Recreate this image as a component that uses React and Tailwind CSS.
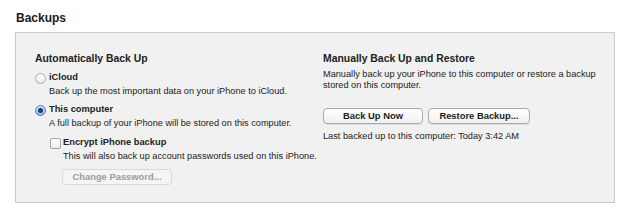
const font = { fontFamily: '"Liberation Sans", Arial, sans-serif' };

const Radio = ({ checked }) => (
  <span
    className={`flex items-center justify-center w-[11px] h-[11px] rounded-full border shrink-0 ${
      checked
        ? "border-[#4f7fc4] bg-gradient-to-b from-[#cfe0f7] to-[#8fb6ea]"
        : "border-[#a9a9a9] bg-gradient-to-b from-[#ffffff] to-[#e9e9e9]"
    }`}
  >
    {checked && <span className="w-[5px] h-[5px] rounded-full bg-[#1d3f73]" />}
  </span>
);

const Checkbox = () => (
  <span className="w-[11px] h-[11px] rounded-[2px] border border-[#a5a5a5] bg-gradient-to-b from-white to-[#ededed] shrink-0" />
);

const Button = ({ children, disabled, className = "" }) => (
  <button
    className={`h-[16px] rounded-[4px] border text-[9.4px] font-bold leading-none flex items-center justify-center ${
      disabled
        ? "border-[#d8d8d8] bg-[#f5f5f5] text-[#9c9c9c]"
        : "border-[#ababab] bg-gradient-to-b from-white to-[#f0f0f0] text-[#1e1e1e] shadow-[0_1px_0_rgba(0,0,0,0.08)]"
    } ${className}`}
  >
    {children}
  </button>
);

export default function App() {
  return (
    <div className="w-[628px] h-[216px] bg-white text-[#222] pt-[11px]" style={font}>
      <h1 className="ml-[16px] text-[12px] font-bold leading-[14px] text-[#1a1a1a]">Backups</h1>
      <div className="ml-[15px] mt-[7px] w-[600px] h-[171px] border border-[#cbcbcb] bg-[#f1f1f1] flex pt-[19px]">
        <div className="w-[307px] shrink-0 pl-[19px]">
          <h2 className="text-[10.4px] font-bold leading-[13px]">Automatically Back Up</h2>
          <div className="mt-[6px] flex items-center gap-[3px] h-[14px]">
            <Radio />
            <span className="text-[9.3px] font-bold">iCloud</span>
          </div>
          <p className="pl-[14px] text-[9.2px] leading-[12px]">
            Back up the most important data on your iPhone to iCloud.
          </p>
          <div className="mt-[6px] flex items-center gap-[3px] h-[14px]">
            <Radio checked />
            <span className="text-[9.3px] font-bold">This computer</span>
          </div>
          <p className="pl-[14px] text-[9.2px] leading-[12px]">
            A full backup of your iPhone will be stored on this computer.
          </p>
          <div className="pl-[15px] mt-[7px] flex items-center gap-[2px] h-[14px]">
            <Checkbox />
            <span className="text-[9.3px] font-bold">Encrypt iPhone backup</span>
          </div>
          <p className="pl-[28px] text-[9.2px] leading-[12px] whitespace-nowrap">
            This will also back up account passwords used on this iPhone.
          </p>
          <div className="pl-[27px] mt-[7px]">
            <Button disabled className="w-[110px]">
              Change Password...
            </Button>
          </div>
        </div>
        <div className="flex-1">
          <h2 className="text-[10.4px] font-bold leading-[13px]">Manually Back Up and Restore</h2>
          <p className="mt-[4px] text-[9.2px] leading-[10.5px] w-[275px]">
            Manually back up your iPhone to this computer or restore a backup stored on this computer.
          </p>
          <div className="mt-[18px] flex gap-[5px]">
            <Button className="w-[100px]">Back Up Now</Button>
            <Button className="w-[102px]">Restore Backup...</Button>
          </div>
          <p className="mt-[6px] text-[9.2px] leading-[12px]">
            Last backed up to this computer: Today 3:42 AM
          </p>
        </div>
      </div>
    </div>
  );
}
